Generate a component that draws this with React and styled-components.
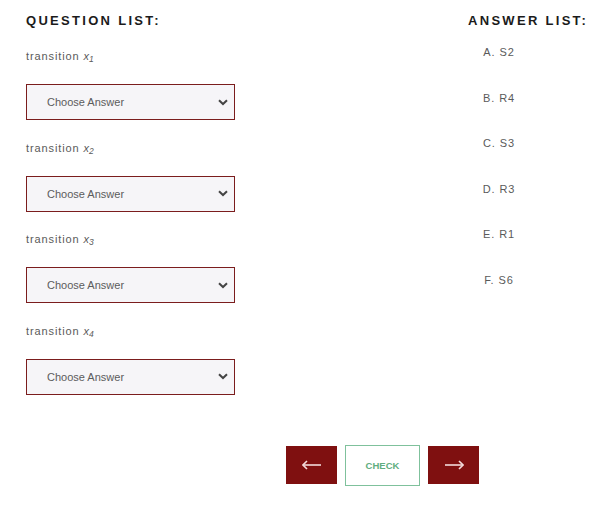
import React from "react";
import styled, { createGlobalStyle } from "styled-components";

const GlobalStyle = createGlobalStyle`
  body {
    margin: 0;
    background: #fff;
    font-family: "Liberation Sans", Arial, sans-serif;
  }
`;

const Page = styled.div`
  width: 599px;
  height: 514px;
  box-sizing: border-box;
  padding-top: 13px;
`;

const Columns = styled.div`
  display: flex;
`;

const QuestionCol = styled.div`
  padding-left: 26px;
  width: 209px;
`;

const AnswerCol = styled.div`
  margin-left: 233px;
`;

const Heading = styled.h2`
  margin: 0;
  font-size: 13px;
  line-height: 16px;
  font-weight: bold;
  letter-spacing: 2.3px;
  color: #1b1b1b;
  white-space: nowrap;
`;

const Label = styled.div`
  margin-top: ${(p) => (p.first ? "20px" : "20.5px")};
  height: 14px;
  font-size: 11px;
  line-height: 14px;
  letter-spacing: 0.9px;
  color: #5a5a5a;
`;

const Var = styled.span`
  font-style: italic;
  letter-spacing: 0;
  sub {
    font-size: 8.5px;
    line-height: 0;
    vertical-align: -2px;
  }
`;

const chevron =
  "url(\"data:image/svg+xml;utf8,<svg xmlns='http://www.w3.org/2000/svg' width='10' height='7' viewBox='0 0 10 7'><path d='M1 1.2 L5 5 L9 1.2' fill='none' stroke='%23444' stroke-width='2'/></svg>\")";

const Select = styled.select`
  display: block;
  margin-top: 21px;
  width: 209px;
  height: 36px;
  box-sizing: border-box;
  border: 1px solid #7b1d1d;
  border-radius: 0;
  background: #f6f5f8 ${chevron} no-repeat right 6px center;
  appearance: none;
  -webkit-appearance: none;
  padding: 0 0 0 20px;
  font-family: "Liberation Sans", Arial, sans-serif;
  font-size: 11px;
  color: #5c5c5c;
  outline: none;
`;

const AnswerItems = styled.ul`
  list-style: none;
  margin: 0;
  padding: 0 0 0 14px;
`;

const AnswerItem = styled.li`
  width: 34px;
  text-align: center;
  font-size: 11px;
  line-height: 14px;
  letter-spacing: 0.9px;
  color: #5a5a5a;
  margin-top: ${(p) => (p.first ? "16px" : "31.6px")};
`;

const Footer = styled.div`
  display: flex;
  align-items: center;
  gap: 8px;
  margin-top: 50px;
  padding-left: 286px;
`;

const ArrowButton = styled.button`
  display: flex;
  align-items: center;
  justify-content: center;
  width: 51px;
  height: 38px;
  border: none;
  background: #7f1010;
  padding: 0;
  cursor: pointer;
`;

const CheckButton = styled.button`
  width: 75px;
  height: 41px;
  border: 1px solid #7fc19c;
  background: #fff;
  color: #5fae80;
  font-family: "Liberation Sans", Arial, sans-serif;
  font-size: 9.5px;
  font-weight: bold;
  cursor: pointer;
`;

const Arrow = ({ dir }) => (
  <svg width="20" height="10" viewBox="0 0 20 10">
    <g
      transform={dir === "left" ? "" : "translate(20 0) scale(-1 1)"}
      fill="none"
      stroke="#f3dada"
      strokeWidth="1.6"
    >
      <path d="M1 5 H19" />
      <path d="M5 1 L1 5 L5 9" />
    </g>
  </svg>
);

const questions = ["1", "2", "3", "4"];
const answers = ["A. S2", "B. R4", "C. S3", "D. R3", "E. R1", "F. S6"];

export default function App() {
  return (
    <Page>
      <GlobalStyle />
      <Columns>
        <QuestionCol>
          <Heading>QUESTION LIST:</Heading>
          {questions.map((n, i) => (
            <React.Fragment key={n}>
              <Label first={i === 0}>
                transition <Var>x<sub>{n}</sub></Var>
              </Label>
              <Select defaultValue="">
                <option value="">Choose Answer</option>
                {answers.map((a) => (
                  <option key={a}>{a}</option>
                ))}
              </Select>
            </React.Fragment>
          ))}
        </QuestionCol>
        <AnswerCol>
          <Heading>ANSWER LIST:</Heading>
          <AnswerItems>
            {answers.map((a, i) => (
              <AnswerItem key={a} first={i === 0}>
                {a}
              </AnswerItem>
            ))}
          </AnswerItems>
        </AnswerCol>
      </Columns>
      <Footer>
        <ArrowButton>
          <Arrow dir="left" />
        </ArrowButton>
        <CheckButton>CHECK</CheckButton>
        <ArrowButton>
          <Arrow dir="right" />
        </ArrowButton>
      </Footer>
    </Page>
  );
}
